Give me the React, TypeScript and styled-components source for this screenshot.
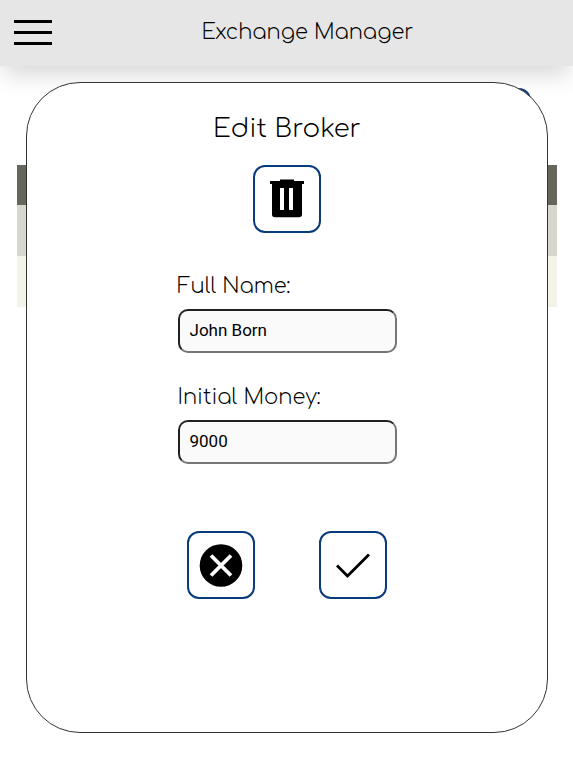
import React from 'react';
import styled, { createGlobalStyle } from 'styled-components';

const GlobalStyle = createGlobalStyle`
  *, *::before, *::after { box-sizing: border-box; }
  body {
    margin: 0;
    background: #fff;
    color: #000;
    font-family: Comfortaa, "DejaVu Sans Light", "DejaVu Sans", sans-serif;
    font-weight: 300;
  }
`;

const Header = styled.header`
  position: relative;
  display: grid;
  grid-template-columns: 1fr auto 1fr;
  align-items: center;
  height: 66px;
  padding: 0 14px;
  background: #e6e6e6;
  box-shadow: 0 12px 24px -4px rgba(0, 0, 0, 0.17);
`;

const MenuButton = styled.button`
  justify-self: start;
  display: flex;
  padding: 0;
  border: 0;
  background: none;
`;

const Brand = styled.h1`
  grid-column: 2;
  margin: 0 0 2px;
  padding-left: 42px;
  font-size: 21px;
  line-height: 28px;
  font-weight: inherit;
`;

const Page = styled.main`
  padding: 22px 16px 0 17px;
`;

const Toolbar = styled.div`
  display: flex;
  justify-content: flex-end;
  padding: 0 26px 9px 0;
`;

const IconButton = styled.button`
  display: flex;
  align-items: center;
  justify-content: center;
  width: 68px;
  height: 68px;
  padding: 0;
  border: 2px solid #073b7c;
  border-radius: 12px;
  background: #fff;
  color: #000;
`;

const BrokerTable = styled.table`
  width: 100%;
  border-collapse: collapse;
  th { height: 40px; background: #66665a; }
  td { height: 51px; background: #f3f3e8; }
  tr:nth-child(odd) td { background: #d8d7cd; }
`;

const Dialog = styled.section`
  position: absolute;
  top: 82px;
  left: 26px;
  right: 25px;
  min-height: 651px;
  display: flex;
  flex-direction: column;
  align-items: center;
  padding: 30px 20px;
  border: 1px solid #333;
  border-radius: 54px;
  background: #fff;
`;

const Title = styled.h2`
  margin: 0 0 20px;
  font-size: 26px;
  line-height: 32px;
  font-weight: inherit;
`;

const Form = styled.form`
  display: flex;
  flex-direction: column;
  align-items: center;
  padding-top: 39px;
`;

const Field = styled.div`
  display: flex;
  flex-direction: column;
  gap: 9px;
  width: 219px;
  margin-bottom: 30px;
`;

const Label = styled.label`
  font-size: 21px;
  line-height: 28px;
`;

const Input = styled.input`
  width: 100%;
  height: 44px;
  padding: 0 10px 3px;
  border: 2px inset #767676;
  border-radius: 10px;
  background: #fafafa;
  color: #000;
  font: 400 17px Roboto, sans-serif;
`;

const Actions = styled.div`
  display: flex;
  gap: 64px;
  padding-top: 37px;
`;

export default function App() {
  return (
    <>
      <GlobalStyle />
      <Header>
        <MenuButton aria-label="Menu">
          <svg width="38" height="26" viewBox="0 0 38 26" aria-hidden="true">
            <path d="M0 1.5H38M0 12.5H38M0 23.5H38" stroke="#000" strokeWidth="3" />
          </svg>
        </MenuButton>
        <Brand>Exchange Manager</Brand>
      </Header>
      <Page>
        <Toolbar>
          <IconButton aria-label="Add broker" />
        </Toolbar>
        <BrokerTable aria-label="Brokers">
          <thead><tr><th /></tr></thead>
          <tbody>
            <tr><td /></tr>
            <tr><td /></tr>
          </tbody>
        </BrokerTable>
      </Page>
      <Dialog role="dialog" aria-labelledby="dialog-title">
        <Title id="dialog-title">Edit Broker</Title>
        <IconButton aria-label="Delete broker">
          <svg width="34" height="40" viewBox="0 0 34 40" aria-hidden="true">
            <path
              fillRule="evenodd"
              d="M10 0.5H24V2H34V5H32V35.5Q32 38.3 29 38.3H5Q2 38.3 2 35.5V5H0V2H10ZM10 9V31H14V9ZM19 9V31H23V9Z"
            />
          </svg>
        </IconButton>
        <Form onSubmit={(event) => event.preventDefault()}>
          <Field>
            <Label htmlFor="full-name">Full Name:</Label>
            <Input id="full-name" type="text" defaultValue="John Born" />
          </Field>
          <Field>
            <Label htmlFor="initial-money">Initial Money:</Label>
            <Input id="initial-money" type="text" inputMode="numeric" defaultValue="9000" />
          </Field>
          <Actions>
            <IconButton type="button" aria-label="Cancel">
              <svg width="44" height="44" viewBox="0 0 44 44" aria-hidden="true">
                <circle cx="22" cy="22.5" r="21.3" />
                <path d="M12 12.5L32 32.5M32 12.5L12 32.5" stroke="#fff" strokeWidth="3.8" />
              </svg>
            </IconButton>
            <IconButton type="submit" aria-label="Save">
              <svg width="34" height="26" viewBox="0 0 34 26" fill="none" aria-hidden="true">
                <path d="M1 13.5L11.5 24L33 2.5" stroke="#000" strokeWidth="2.8" />
              </svg>
            </IconButton>
          </Actions>
        </Form>
      </Dialog>
    </>
  );
}
